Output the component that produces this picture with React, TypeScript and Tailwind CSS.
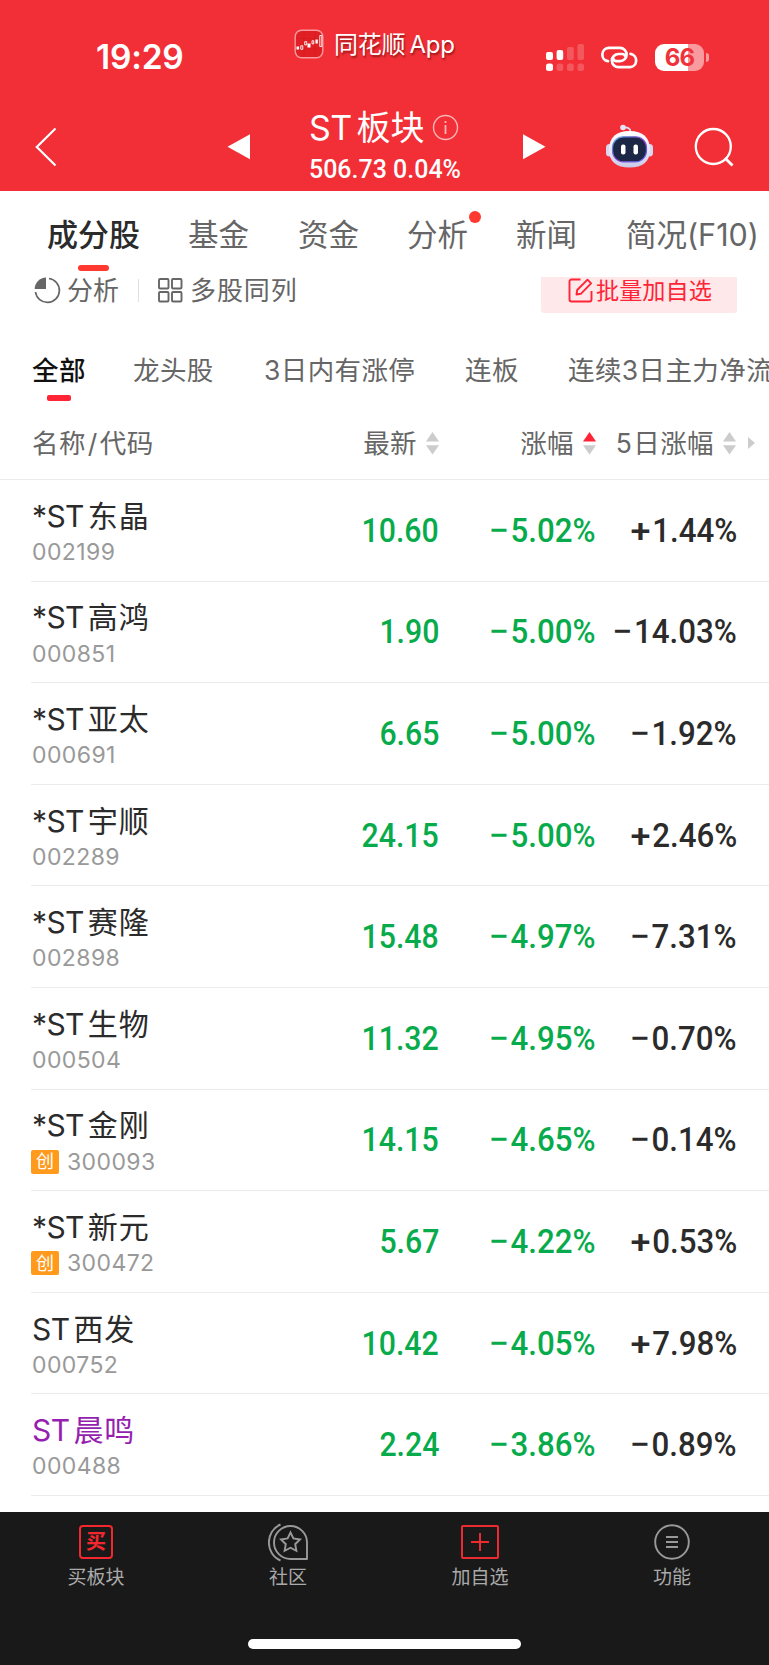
import type { ReactNode } from "react";

interface Stock {
  prefix: string;
  name: string;
  code: string;
  price: string;
  change: string;
  change5: string;
  chinext?: boolean;
  visited?: boolean;
}

const STOCKS: Stock[] = [
  { prefix: "*ST", name: "东晶", code: "002199", price: "10.60", change: "−5.02%", change5: "+1.44%" },
  { prefix: "*ST", name: "高鸿", code: "000851", price: "1.90", change: "−5.00%", change5: "−14.03%" },
  { prefix: "*ST", name: "亚太", code: "000691", price: "6.65", change: "−5.00%", change5: "−1.92%" },
  { prefix: "*ST", name: "宇顺", code: "002289", price: "24.15", change: "−5.00%", change5: "+2.46%" },
  { prefix: "*ST", name: "赛隆", code: "002898", price: "15.48", change: "−4.97%", change5: "−7.31%" },
  { prefix: "*ST", name: "生物", code: "000504", price: "11.32", change: "−4.95%", change5: "−0.70%" },
  { prefix: "*ST", name: "金刚", code: "300093", price: "14.15", change: "−4.65%", change5: "−0.14%", chinext: true },
  { prefix: "*ST", name: "新元", code: "300472", price: "5.67", change: "−4.22%", change5: "+0.53%", chinext: true },
  { prefix: "ST", name: "西发", code: "000752", price: "10.42", change: "−4.05%", change5: "+7.98%" },
  { prefix: "ST", name: "晨鸣", code: "000488", price: "2.24", change: "−3.86%", change5: "−0.89%", visited: true },
];

const TABS = [
  { label: "成分股", width: "w-[141px]", active: true },
  { label: "基金", width: "w-[110px]" },
  { label: "资金", width: "w-[109px]" },
  { label: "分析", width: "w-[109px]", dot: true },
  { label: "新闻", width: "w-[110px]" },
  { label: "简况(F10)", width: "w-[140px]" },
];

const FILTERS = [
  { label: "全部", width: "w-[101px]", active: true },
  { label: "龙头股", width: "w-[131px]" },
  { label: "3日内有涨停", width: "w-[201px]" },
  { label: "连板", width: "w-[103px]" },
  { label: "连续3日主力净流", width: "w-[260px]" },
];

function StatusBar() {
  return (
    <div className="flex h-[102px] items-start">
      <div className="w-[294px] pt-[36px] pl-[96px] text-[33.500px] leading-[42px] font-semibold tracking-[-0.200px]">
        19:29
      </div>
      <div className="flex w-[252px] pt-[29px]">
        <svg width="30" height="30" viewBox="0 0 30 30" fill="none">
          <rect x="1.2" y="1.2" width="27.6" height="27.6" rx="6.5" fill="#e02024" stroke="#f79a9d" strokeWidth="1.4" />
          <path d="M2 9.5h26M2 20h26M10 2v26M21 2v26" stroke="#d01a1e" strokeWidth=".5" />
          <path d="M2.5 17.5h2.6v3H2.500zM13.500 14.500h3v4h-3zM21.500 10.500h2.300v4h-2.300z" fill="#fff" />
          <path d="M6.800 16.800h2v3.500h-2zM10.700 12.700h2v3.200h-2zM18 11.800h1.800v3H18zM25.800 6.500h2v11h-2z" stroke="#fff" strokeWidth=".9" />
        </svg>
        <span className="ml-[10px] text-[24px] leading-[32px] tracking-[-0.2px] [text-shadow:1px_2px_2px_rgba(80,0,0,0.55)]">
          同花顺<span className="ml-[4px]">App</span>
        </span>
      </div>
      <svg className="mt-[43px]" width="40" height="29" viewBox="0 0 40 29" fill="#fff">
        <rect y="9" width="7" height="8" rx="2" />
        <rect x="10.600" y="7" width="6.600" height="10" rx="2" />
        <rect x="21" y="4" width="6.800" height="13" rx="2" opacity=".2" />
        <rect x="31.500" y="1" width="6.500" height="16" rx="2" opacity=".2" />
        <rect y="20.500" width="7" height="7.500" rx="2.500" />
        <rect x="10.600" y="20.500" width="6.600" height="7.500" rx="2.500" opacity=".2" />
        <rect x="21" y="20.500" width="6.800" height="7.500" rx="2.500" opacity=".2" />
        <rect x="31.500" y="20.500" width="6.500" height="7.500" rx="2.500" opacity=".2" />
      </svg>
      <svg className="mt-[45px] ml-[14px]" width="39" height="25" viewBox="0 0 39 25" fill="none" stroke="#fff" strokeWidth="2.700" strokeLinecap="round">
        <path d="M8 16.200A6.700 6.700 0 0 1 8.500 2.900H20a6.600 6.600 0 0 1 0 13.200h-3.500q-2.500 0-3-2" />
        <path d="M30.500 8.900A6.700 6.700 0 0 1 30 22.200H18.500a6.600 6.600 0 0 1 0-13.200H22q2.500 0 3 2" />
      </svg>
      <div className="mt-[44px] ml-[16px] flex items-center">
        <div className="flex h-[27px] w-[49px] items-center justify-center rounded-[9px] bg-[linear-gradient(90deg,#fff_67%,#f99a9e_67%)] text-[24px] font-bold tracking-[-0.800px] text-[#f0323a]">
          66
        </div>
        <div className="ml-[2px] h-[9px] w-[3px] rounded-r-full bg-[#f99a9e]" />
      </div>
    </div>
  );
}

function RobotIcon() {
  return (
    <svg width="48" height="46" viewBox="0 0 48 46" fill="none">
      <defs>
        <linearGradient id="shell" x1="0" y1="0" x2="0" y2="1">
          <stop offset="0" stopColor="#fff" />
          <stop offset=".6" stopColor="#e6e4f6" />
          <stop offset="1" stopColor="#c9c9e8" />
        </linearGradient>
        <linearGradient id="rim" x1="0" y1="0" x2="1" y2="1">
          <stop offset="0" stopColor="#4fb4e8" />
          <stop offset=".5" stopColor="#8a3fd0" />
          <stop offset="1" stopColor="#5c6cf5" />
        </linearGradient>
      </defs>
      <path d="M17 3.500q7.500-.8 7.500 4.500" stroke="#dcdcf2" strokeWidth="1.800" />
      <circle cx="17" cy="3.500" r="2.800" fill="#e6e4f6" />
      <rect x="0" y="20" width="7" height="12.500" rx="3.500" fill="#d8d8f2" />
      <rect x="40" y="20" width="7" height="12.500" rx="3.500" fill="#d8d8f2" />
      <path d="M3 26C3 13.500 10 7 23.500 7S44 13.500 44 26c0 11.500-7 17.500-20.500 17.500S3 37.500 3 26z" fill="url(#shell)" />
      <rect x="6.500" y="12.800" width="34" height="25" rx="11" fill="#1c2745" stroke="url(#rim)" strokeWidth="1.200" />
      <rect x="15" y="20.500" width="4.500" height="10" rx="2" fill="#fff" />
      <rect x="27.500" y="20.500" width="4.500" height="10" rx="2" fill="#fff" />
    </svg>
  );
}

function TitleBar() {
  return (
    <div className="flex h-[89px]">
      <svg className="mt-[24px] ml-[34px]" width="24" height="42" viewBox="0 0 24 42" fill="none" stroke="#fff" strokeWidth="2.200">
        <path d="M21.500 2.500 2.800 21 21.500 39.500" />
      </svg>
      <svg className="mt-[32px] ml-[169px]" width="24" height="26" viewBox="0 0 24 26" fill="#fff">
        <path d="M.5 12.700 23 .3v25z" />
      </svg>
      <div className="ml-[58px] w-[213px]">
        <div className="flex h-[50px] items-center text-[34px]">
          <span className="tracking-[-0.6px]">ST</span>
          <span className="ml-[5px]">板块</span>
          <svg className="ml-[7px]" width="27" height="27" viewBox="0 0 27 27" fill="none" stroke="#fbb4b7" strokeWidth="1.400">
            <circle cx="13.500" cy="13.500" r="12" />
            <path d="M13.500 11v9M13.500 7v2" strokeWidth="1.800" />
          </svg>
        </div>
        <div className="origin-left scale-x-[0.96] font-[Roboto] text-[26px] leading-[35px] font-medium whitespace-nowrap">
          506.73 0.04%
        </div>
      </div>
      <svg className="mt-[32px]" width="24" height="26" viewBox="0 0 24 26" fill="#fff">
        <path d="M23.500 12.700 1 .3v25z" />
      </svg>
      <div className="mt-[22px] ml-[60px]">
        <RobotIcon />
      </div>
      <svg className="mt-[24px] ml-[40px]" width="42" height="42" viewBox="0 0 42 42" fill="none" stroke="#fff" strokeWidth="2.300">
        <circle cx="19.300" cy="20.500" r="17.500" />
        <path d="m31 32 7.500 7.500" strokeWidth="2.800" />
      </svg>
    </div>
  );
}

function SortArrows({ active }: { active?: boolean }) {
  return (
    <svg className="shrink-0" width="13" height="23" viewBox="0 0 13 23">
      <path d="M6.500 0 13 9.500H0z" fill={active ? "#ff2436" : "#ccc"} />
      <path d="M6.500 22.500 13 13.200H0z" fill="#ccc" />
    </svg>
  );
}

function Toolbar() {
  return (
    <div className="flex h-[46px] items-start text-[26px] leading-[28px] text-[#666]">
      <svg className="ml-[34px]" width="27" height="27" viewBox="0 0 27 27">
        <path d="M12 .5V12H.7A11.500 11.500 0 0 1 12 .5z" fill="#666" />
        <path d="M15 1.500A12 12 0 1 1 1.500 15" fill="none" stroke="#666" strokeWidth="1.700" />
      </svg>
      <span className="ml-[6px]">分析</span>
      <div className="mt-[2px] ml-[19px] h-[23px] w-px bg-[#e0e0e0]" />
      <svg className="mt-[1px] ml-[19px]" width="25" height="25" viewBox="0 0 25 25" fill="none" stroke="#666" strokeWidth="1.900">
        <rect x="1" y="1" width="9.500" height="9.500" rx="1" />
        <rect x="14" y="1" width="9.500" height="9.500" rx="1" />
        <rect x="1" y="14" width="9.500" height="9.500" rx="1" />
        <rect x="14" y="14" width="9.500" height="9.500" rx="1" />
      </svg>
      <span className="ml-[7px] tracking-[0.9px]">多股同列</span>
      <div className="mr-[32px] ml-auto flex h-[36px] w-[196px] rounded-b-[3px] bg-[#ffe8ea] pl-[27px] text-[23.200px] text-[#ff2436]">
        <svg className="mt-[1px] mr-[3px]" width="25" height="25" viewBox="0 0 25 25" fill="none" stroke="#ff2436" strokeWidth="1.900">
          <path d="M12.500 1.500H3.500a2 2 0 0 0-2 2v18a2 2 0 0 0 2 2h18a2 2 0 0 0 2-2V13" />
          <path d="M8.500 16.500 9.200 12 19.500 1.700l3.600 3.600L12.800 15.800z" strokeLinejoin="round" />
        </svg>
        批量加自选
      </div>
    </div>
  );
}

function StockRow({ stock }: { stock: Stock }) {
  return (
    <div className="ml-[31px] flex h-[101.600px] items-center border-b border-[#ececec]">
      <div className="w-[251px] pt-[4px] pl-px">
        <div className={`flex text-[30px] leading-[40px] tracking-[-0.6px] ${stock.visited ? "text-[#961fb0]" : "text-[#2b2b2b]"}`}>
          <span>{stock.prefix}</span>
          <span className="ml-[4px] tracking-[0.800px]">{stock.name}</span>
        </div>
        <div className="flex h-[33px] items-center text-[23px] tracking-[0.400px] text-[#999]">
          {stock.chinext && (
            <span className="mr-[8px] -ml-px flex h-[24px] w-[28px] items-center justify-center rounded-[2px] bg-[#ff9a1c] text-[18px] tracking-normal text-white">
              创
            </span>
          )}
          {stock.code}
        </div>
      </div>
      <Price value={stock.price} />
      <Percent value={stock.change} width="w-[157px]" color="text-[#07ab4b]" />
      <Percent value={stock.change5} width="w-[141px]" color="text-[#2b2b2b]" />
    </div>
  );
}

function Price({ value }: { value: string }) {
  return (
    <div className="flex w-[157px] shrink-0 justify-end font-[Roboto] text-[34px] font-medium text-[#07ab4b]">
      <span className="origin-right scale-x-[0.89]">{value}</span>
    </div>
  );
}

function Percent({ value, width, color }: { value: string; width: string; color: string }) {
  return (
    <div className={`flex shrink-0 justify-end font-[Roboto] text-[34px] font-medium whitespace-nowrap ${width} ${color}`}>
      <span className="flex origin-right scale-x-[0.92]">
        <span className="mr-[2px] origin-right scale-x-[1.15]">{value[0]}</span>
        {value.slice(1)}
      </span>
    </div>
  );
}

function BottomBar() {
  return (
    <div className="flex h-[153px] flex-col items-center bg-[#191919] text-[19px] text-[#aaa]">
      <div className="flex h-[127px] w-full pr-px">
        <NavItem label="买板块">
          <span className="flex h-[34px] w-[34px] items-center justify-center rounded-[4px] border-2 border-[#f3282e] text-[20px] leading-none font-bold text-[#f3282e]">
            买
          </span>
        </NavItem>
        <NavItem label="社区">
          <svg width="40" height="39" viewBox="0 0 40 39" fill="none" stroke="#999" strokeWidth="1.900">
            <path d="M39 36V19.500A16.500 16.500 0 1 0 22.500 36z" strokeLinejoin="round" />
            <path d="M12.500 1.500C-3 8-3 31 12.500 37.500" />
            <path d="m22.500 9.500 2.900 6 6.600 1-4.800 4.700 1.200 6.600-5.900-3.100-5.900 3.100 1.200-6.600-4.800-4.700 6.600-1z" />
          </svg>
        </NavItem>
        <NavItem label="加自选">
          <svg width="38" height="34" viewBox="0 0 38 34" fill="none" stroke="#ec2b30" strokeWidth="2">
            <rect x="1" y="1" width="36" height="32" rx="1" />
            <path d="M19 8v18M10 17h18" />
          </svg>
        </NavItem>
        <NavItem label="功能">
          <svg width="36" height="36" viewBox="0 0 36 36" fill="none" stroke="#999" strokeWidth="1.900">
            <circle cx="18" cy="18" r="16.800" />
            <path d="M12 13h12M12 18h12M12 23h12" strokeWidth="2" />
          </svg>
        </NavItem>
      </div>
      <div className="h-[10px] w-[273px] rounded-full bg-white" />
    </div>
  );
}

function NavItem({ label, children }: { label: string; children: ReactNode }) {
  return (
    <div className="flex flex-1 flex-col items-center pt-[10px]">
      <div className="flex h-[40px] items-center">{children}</div>
      <span className="mt-[2px] leading-[28px]">{label}</span>
    </div>
  );
}

export default function App() {
  return (
    <div className="h-[1665px] w-[769px] overflow-hidden bg-white font-['Inter','Noto_Sans_CJK_SC',sans-serif]">
      <header className="h-[191px] bg-[#f22f37] text-white">
        <StatusBar />
        <TitleBar />
      </header>

      {/* Section tabs */}
      <nav className="flex h-[86px] overflow-hidden pl-[47px] text-[30.500px] text-[#666]">
        {TABS.map((tab) => (
          <div key={tab.label} className={`flex shrink-0 items-start whitespace-nowrap ${tab.width}`}>
            <div className="relative flex flex-col items-center pt-[21px] leading-[46px]">
              <span className={tab.active ? "text-[31px] font-medium text-[#2b2b2b]" : ""}>{tab.label}</span>
              {tab.active && <span className="mt-[7px] h-[6px] w-[31px] rounded-full bg-[#ff3830]" />}
              {tab.dot && <span className="absolute top-[20px] -right-[13px] h-[12px] w-[12px] rounded-full bg-[#ff3830]" />}
            </div>
          </div>
        ))}
      </nav>

      <Toolbar />

      {/* Filters */}
      <div className="flex h-[93px] overflow-hidden pl-[32px] text-[26.500px] tracking-[0.400px] text-[#666]">
        {FILTERS.map((filter) => (
          <div key={filter.label} className={`flex shrink-0 items-start whitespace-nowrap ${filter.width}`}>
            <div className="flex flex-col items-center pt-[27px] leading-[40px]">
              <span className={filter.active ? "font-medium text-[#111]" : ""}>{filter.label}</span>
              {filter.active && <span className="mt-[5px] h-[6px] w-[24px] rounded-[2px] bg-[#ff2436]" />}
            </div>
          </div>
        ))}
      </div>

      {/* Table head */}
      <div className="flex h-[64px] items-start border-b border-[#ececec] pt-[10px] pl-[32px] text-[26.500px] leading-[34px] tracking-[0.400px] text-[#666]">
        <span className="w-[251px]">
          名称<span className="mx-[2px]">/</span>代码
        </span>
        <div className="flex w-[156px] items-center justify-end gap-[9px]">
          最新
          <SortArrows />
        </div>
        <div className="flex w-[157px] items-center justify-end gap-[9px]">
          涨幅
          <SortArrows active />
        </div>
        <div className="flex w-[140px] items-center justify-end gap-[9px] whitespace-nowrap">
          <span>
            5<span className="ml-px">日涨幅</span>
          </span>
          <SortArrows />
        </div>
        <svg className="mt-[11px] ml-[12px]" width="7" height="12" viewBox="0 0 7 12">
          <path d="M0 0 7 6 0 12z" fill="#ccc" />
        </svg>
      </div>

      <div className="h-[1032px]">
        {STOCKS.map((stock) => (
          <StockRow key={stock.code} stock={stock} />
        ))}
      </div>

      <BottomBar />
    </div>
  );
}
